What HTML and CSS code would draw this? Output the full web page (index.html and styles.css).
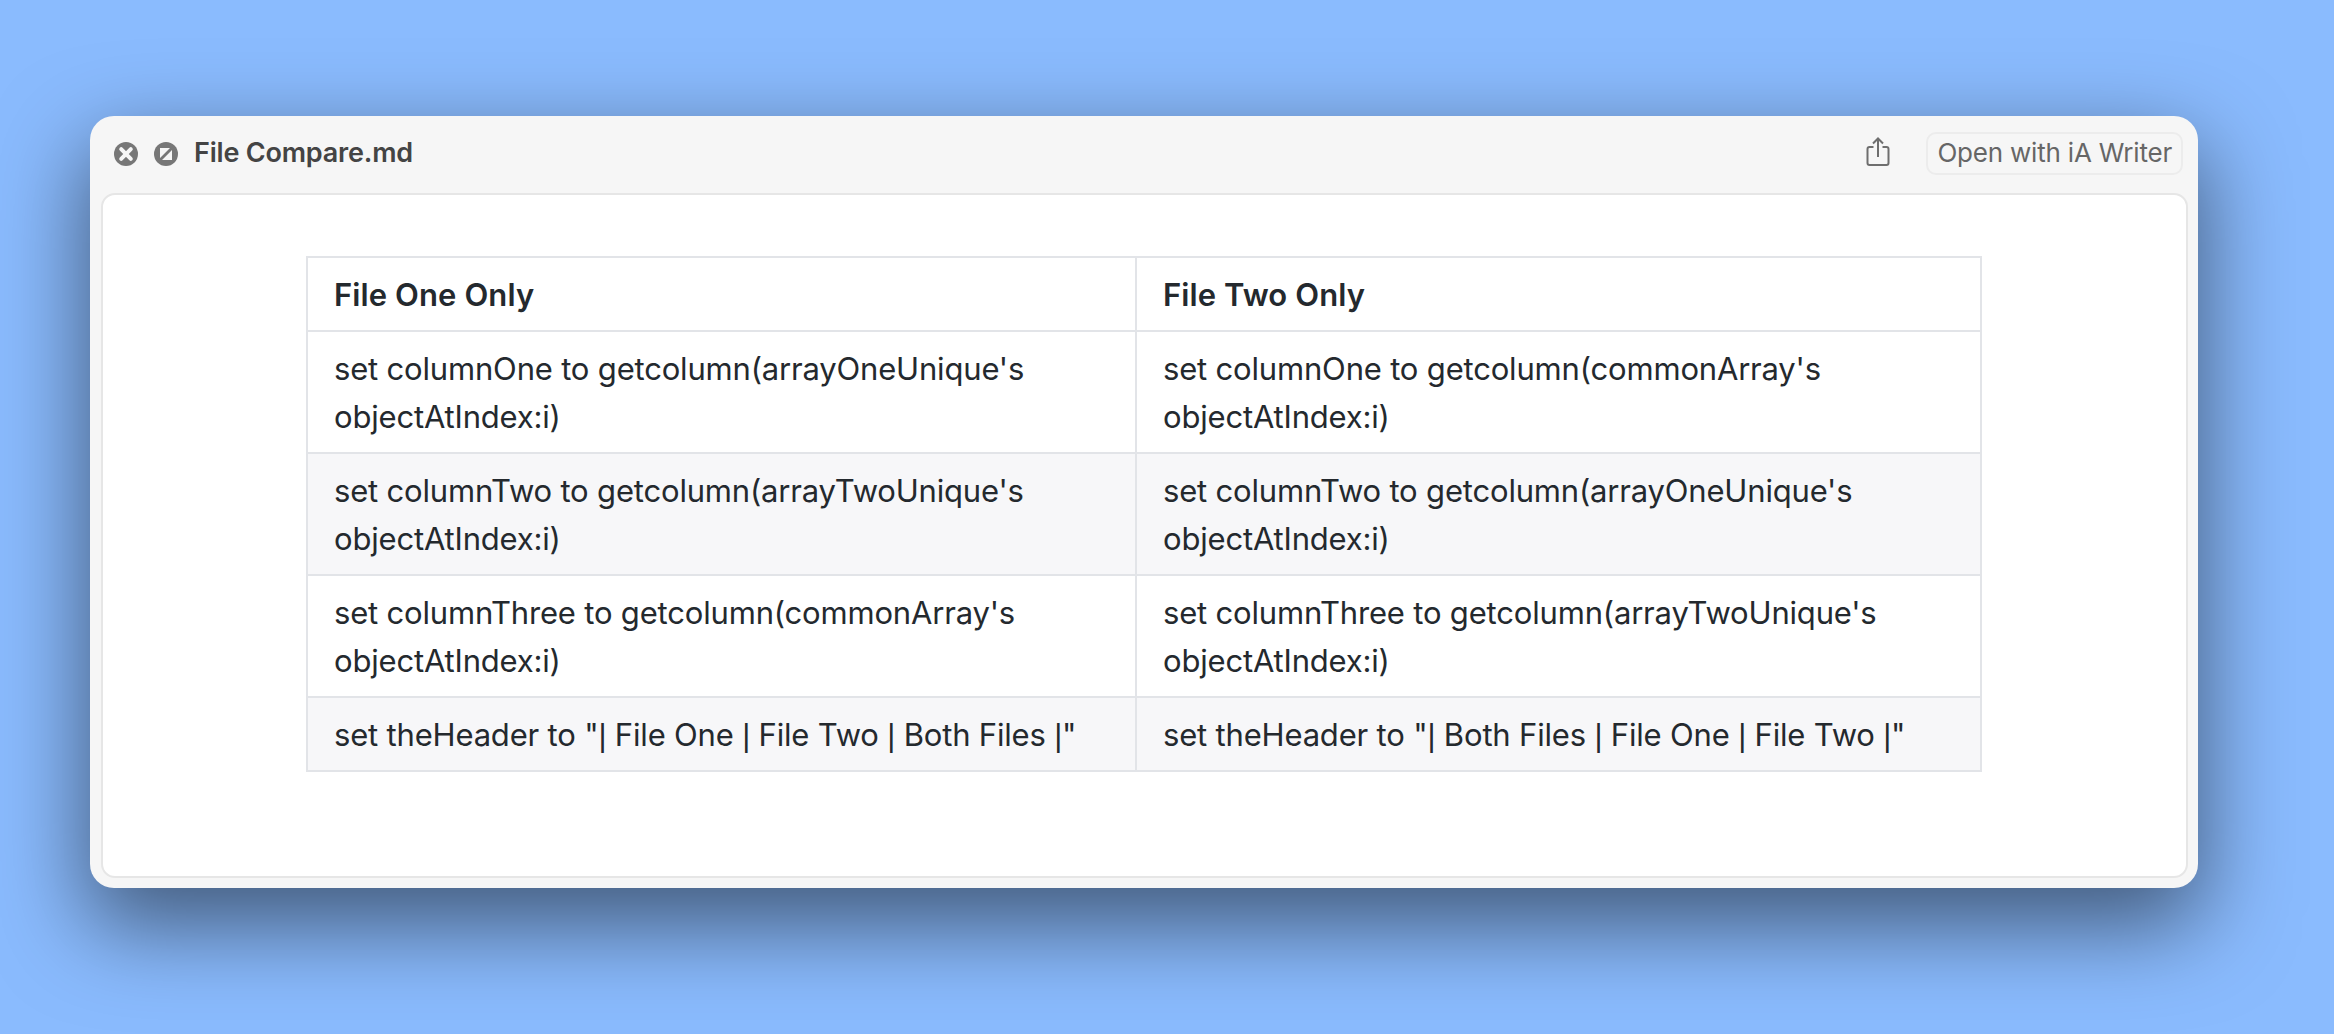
FILE: index.html
```html
<!DOCTYPE html>
<html lang="en">
<head>
<meta charset="utf-8">
<title>File Compare.md</title>
<link rel="stylesheet" href="styles.css">
</head>
<body>
<main class="window">
  <header class="titlebar">
    <svg class="dot" viewBox="0 0 24 24" aria-hidden="true"><circle cx="12" cy="12" r="12" fill="#777"/><path d="M7.200 7.200l9.600 9.600M16.800 7.200l-9.600 9.600" stroke="#f6f6f6" stroke-width="4" stroke-linecap="round"/></svg>
    <svg class="dot dot-second" viewBox="0 0 24 24" aria-hidden="true"><circle cx="12" cy="12" r="12" fill="#777"/><path d="M6 6h10L6 16zM18 8v10H8z" fill="#f6f6f6"/></svg>
    <h1 class="title">File Compare.md</h1>
    <svg class="share" viewBox="0 0 24 30" aria-hidden="true"><path d="M7.500 10H3.500A2 2 0 0 0 1.500 12V26A2 2 0 0 0 3.500 28H20.500A2 2 0 0 0 22.500 26V12A2 2 0 0 0 20.500 10H16.500" fill="none" stroke="#6e6e6e" stroke-width="2"/><path d="M12 20V2M7 6.500L12 1.500L17 6.500" fill="none" stroke="#6e6e6e" stroke-width="2"/></svg>
    <button class="open-btn">Open with iA Writer</button>
  </header>
  <section class="content">
    <table class="compare">
      <thead>
        <tr><th>File One Only</th><th>File Two Only</th></tr>
      </thead>
      <tbody>
        <tr><td>set columnOne to getcolumn(arrayOneUnique's objectAtIndex:i)</td><td>set columnOne to getcolumn(commonArray's objectAtIndex:i)</td></tr>
        <tr><td>set columnTwo to getcolumn(arrayTwoUnique's objectAtIndex:i)</td><td>set columnTwo to getcolumn(arrayOneUnique's objectAtIndex:i)</td></tr>
        <tr><td>set columnThree to getcolumn(commonArray's objectAtIndex:i)</td><td>set columnThree to getcolumn(arrayTwoUnique's objectAtIndex:i)</td></tr>
        <tr><td>set theHeader to "<span class="pipe">|</span> File One <span class="pipe">|</span> File Two <span class="pipe">|</span> Both Files <span class="pipe">|</span>"</td><td>set theHeader to "<span class="pipe">|</span> Both Files <span class="pipe">|</span> File One <span class="pipe">|</span> File Two <span class="pipe">|</span>"</td></tr>
      </tbody>
    </table>
  </section>
</main>
</body>
</html>
```
FILE: styles.css
```css
* { box-sizing: border-box; }
html, body { height: 100%; }
body {
  margin: 0;
  padding: 116px 136px 0 90px;
  background: #8abbfe;
  overflow: hidden;
  font-family: Inter, "Liberation Sans", sans-serif;
}
.window {
  width: 2108px;
  height: 772px;
  display: flex;
  flex-direction: column;
  background: #f6f6f6;
  border-radius: 24px;
  padding: 0 10px 10px 11px;
  box-shadow: 0 34px 90px 4px rgba(0, 0, 0, 0.52);
}
.titlebar {
  height: 77px;
  flex: none;
  display: flex;
  align-items: center;
  padding: 0 5px 2px 13px;
  color: #444;
}
.dot { width: 24px; height: 24px; flex: none; }
.dot-second { margin-left: 16px; }
.title {
  margin: 0 0 2px 16px;
  font-size: 27px;
  letter-spacing: -0.2px;
  font-weight: 600;
  color: #444;
  flex: 1;
}
.share { width: 24px; height: 30px; flex: none; margin-right: 36px; margin-top: -3px; }
.open-btn {
  height: 43px;
  padding: 0 9px 2px;
  border: 2px solid #ececec;
  border-radius: 10px;
  background: #f6f6f6;
  font: 400 26px Inter, "Liberation Sans", sans-serif;
  letter-spacing: -0.2px;
  color: #666;
}
.content {
  flex: 1;
  background: #fff;
  border: 2px solid #e6e6e6;
  border-radius: 14px;
  padding: 61px 204px 0 203px;
}
.compare {
  width: 1676px;
  border-collapse: collapse;
  table-layout: fixed;
  font-size: 31px;
  letter-spacing: -0.18px;
  line-height: 48px;
  color: #24292e;
}
.compare th, .compare td {
  border: 2px solid #e2e4e8;
  padding: 13px 26px 11px;
  text-align: left;
  vertical-align: top;
}
.compare th { font-weight: 600; letter-spacing: 0.1px; }
.compare th:first-child { width: 829px; }
.compare tbody tr:nth-child(even) { background: #f7f7f9; }
.pipe { font-family: "Liberation Sans", sans-serif; line-height: 1; }
```
